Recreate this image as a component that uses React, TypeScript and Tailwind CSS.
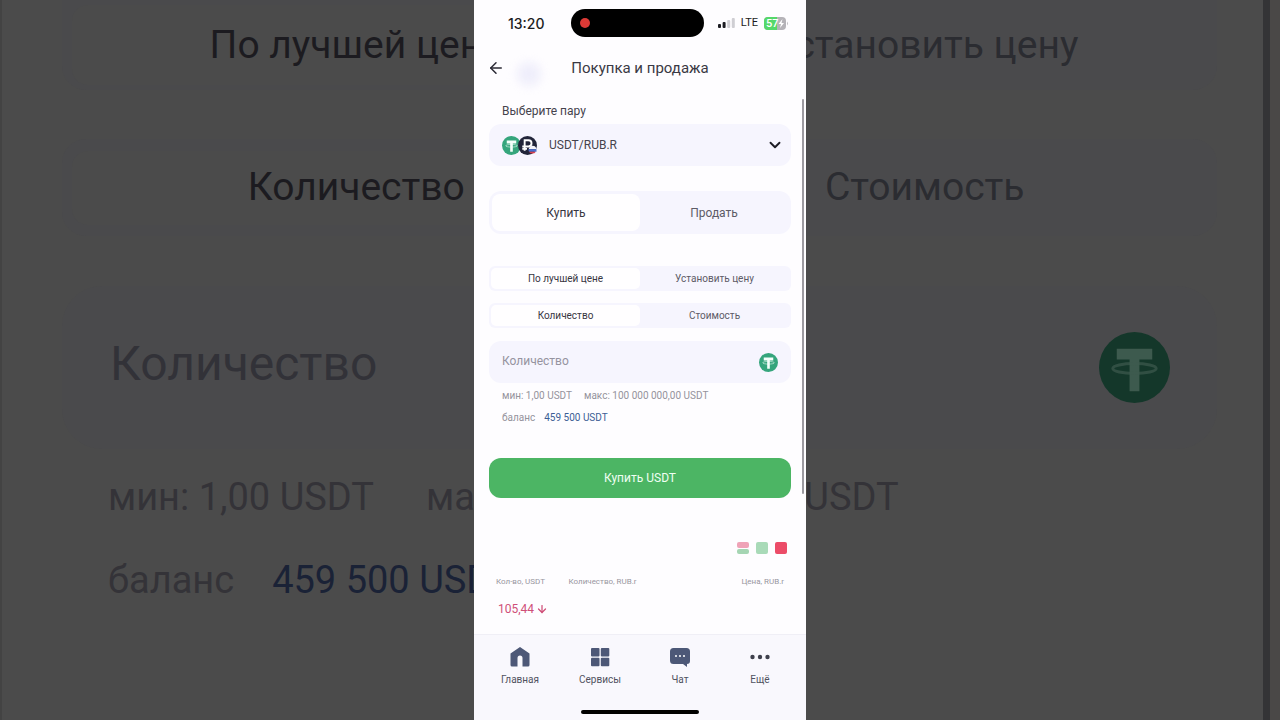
import React, { useState } from "react";
import { ArrowDown, ArrowLeft, ChevronDown } from "lucide-react";
import clsx from "clsx";

function TetherIcon({ className, disc = "#35a57c", mark = "#f4fffa" }: { className?: string; disc?: string; mark?: string }) {
  return (
    <svg viewBox="0 0 72 72" className={className} aria-hidden="true">
      <circle cx="36" cy="36" r="36" fill={disc} />
      <path d="M18 17h36v11H41v32H31V28H18z" fill={mark} />
      <ellipse cx="36" cy="37" rx="22" ry="5" fill="none" stroke={mark} strokeOpacity="0.7" strokeWidth="3" />
    </svg>
  );
}

function RubleIcon({ className }: { className?: string }) {
  return (
    <svg viewBox="0 0 40 40" className={className} aria-hidden="true">
      <circle cx="20" cy="20" r="20" fill="#22253a" />
      <path d="M14 31V9h8a6.500 6.500 0 0 1 0 13H9M9 27h10" fill="none" stroke="#fff" strokeWidth="4" />
      <path d="M22.500 28a8.500 8.500 0 0 1 16-3v3z" fill="#f4f4fb" />
      <path d="M22 28h17v5H23z" fill="#4a6ed0" />
      <path d="M23 33h14.500a8.500 8.500 0 0 1-14.500 0z" fill="#d8404f" />
    </svg>
  );
}

function StatusBar() {
  return (
    <div className="flex h-[46px] items-center pl-[34px] pr-[18px] text-[#1c1c22]">
      <span className="w-[63px] font-['Inter',sans-serif] text-[14px] font-medium">13:20</span>
      <div className="flex h-7 w-[133px] items-center rounded-full bg-black pl-[9px]">
        <span className="size-[10px] rounded-full bg-[#dc3a36]" />
      </div>
      <div className="ml-auto flex items-center gap-[6px]">
        <svg viewBox="0 0 17 10" className="h-[10px] w-[17px]" aria-hidden="true">
          <rect x="0" y="6" width="3" height="4" rx="1" fill="#1c1c22" />
          <rect x="4.6" y="4" width="3" height="6" rx="1" fill="#1c1c22" />
          <rect x="9.2" y="2" width="3" height="8" rx="1" fill="#cfced3" />
          <rect x="13.8" y="0" width="3" height="10" rx="1" fill="#cfced3" />
        </svg>
        <span className="text-[11px] leading-4">LTE</span>
        <div className="relative flex h-[13px] w-6 items-center">
          <svg viewBox="0 0 24 13" className="absolute inset-0 size-full" aria-hidden="true">
            <rect width="22" height="13" rx="4" fill="#b5b3b8" />
            <path d="M4 0h9v13H4a4 4 0 0 1-4-4V4a4 4 0 0 1 4-4z" fill="#55d869" />
            <path d="M23 4.500q1.500 2 0 4z" fill="#b5b3b8" />
            <path d="M18.500 2l-4 5h2.500l-1 4 4-5H17.500z" fill="#fff" />
          </svg>
          <span className="relative pl-[2px] text-[11px] font-medium leading-none text-white">57</span>
        </div>
      </div>
    </div>
  );
}

function Segmented({ options, large = false }: { options: string[]; large?: boolean }) {
  const [active, setActive] = useState(0);

  return (
    <div className={clsx("flex bg-[#f6f5fe]", large ? "h-[43px] rounded-xl p-[3px]" : "h-[25px] rounded-md p-[2px]")}>
      {options.map((option, i) => (
        <button
          key={option}
          type="button"
          aria-pressed={i === active}
          onClick={() => setActive(i)}
          className={clsx(
            "flex-1",
            large ? "rounded-lg text-[12px]" : "rounded-[5px] text-[10px]",
            i === active ? "bg-[#fffeff] text-[#38363f]" : "text-[#5d5b66]"
          )}
        >
          {option}
        </button>
      ))}
    </div>
  );
}

function TradeForm() {
  return (
    <form className="flex flex-col px-[15px]" onSubmit={(e) => e.preventDefault()}>
      <label htmlFor="pair" className="mt-[13px] pl-[13px] text-[12px] leading-4 text-[#45434d]">
        Выберите пару
      </label>
      <div className="relative mt-[5px]">
        <select id="pair" className="h-[42px] w-full appearance-none rounded-xl bg-[#f6f5fe] pl-[60px] text-[12px] text-[#45434d]">
          <option>USDT/RUB.R</option>
        </select>
        <div className="pointer-events-none absolute inset-y-0 left-[13px] flex items-center">
          <TetherIcon className="size-[19px]" />
          <RubleIcon className="-ml-[3px] size-[19px]" />
        </div>
        <ChevronDown size={18} strokeWidth={2.5} className="pointer-events-none absolute right-[7px] top-3 text-[#1d1c24]" />
      </div>

      <div className="mt-[25px]">
        <Segmented large options={["Купить", "Продать"]} />
      </div>
      <div className="mt-8 flex flex-col gap-3">
        <Segmented options={["По лучшей цене", "Установить цену"]} />
        <Segmented options={["Количество", "Стоимость"]} />
      </div>

      <div className="relative mt-[13px]">
        <input
          type="text"
          inputMode="decimal"
          aria-label="Количество"
          placeholder="Количество"
          className="h-[42px] w-full rounded-xl bg-[#f6f5fe] pb-[3px] pl-[13px] pr-11 text-[12px] placeholder:text-[#95939f]"
        />
        <TetherIcon className="pointer-events-none absolute right-[13px] top-3 size-[19px]" />
      </div>

      <div className="mt-[5px] flex gap-3 pl-[13px] text-[10px] leading-4 text-[#95939c]">
        <span>мин: 1,00 USDT</span>
        <span>макс: 100 000 000,00 USDT</span>
      </div>
      <div className="mt-[6px] flex gap-[9px] pl-[13px] text-[10px] leading-4 text-[#95939c]">
        <span>баланс</span>
        <span className="text-[#3c5d95]">459 500 USDT</span>
      </div>

      <button type="submit" className="mt-8 h-10 rounded-xl bg-[#4cb564] text-[12px] text-[#effff2]">
        Купить USDT
      </button>
    </form>
  );
}

function OrderBook() {
  return (
    <section className="mt-[44px] px-[19px]">
      <div className="flex justify-end gap-[7px]">
        <button type="button" aria-label="Все заявки" className="flex size-3 flex-col gap-[1px]">
          <span className="w-full flex-1 rounded-[2px] bg-[#efa3b7]" />
          <span className="w-full flex-1 rounded-[2px] bg-[#a5d5b3]" />
        </button>
        <button type="button" aria-label="Покупка" className="size-3 rounded-[2px] bg-[#a9dab8]" />
        <button type="button" aria-label="Продажа" className="size-3 rounded-[2px] bg-[#ec4c68]" />
      </div>
      <table className="mt-5 w-full">
        <thead>
          <tr className="text-left text-[8px] leading-4 text-[#9896a0]">
            <th className="w-1/4 whitespace-nowrap pl-[3px] font-normal">Кол-во, USDT</th>
            <th className="pl-[2px] font-normal">Количество, RUB.r</th>
            <th className="pr-[3px] text-right font-normal">Цена, RUB.r</th>
          </tr>
        </thead>
        <tbody>
          <tr>
            <td colSpan={3} className="pl-[5px] pt-[11px]">
              <span className="flex items-center gap-[2px] text-[12px] leading-4 text-[#cf4f78]">
                105,44
                <ArrowDown size={12} strokeWidth={2.5} />
              </span>
            </td>
          </tr>
        </tbody>
      </table>
    </section>
  );
}

const tabs = [
  {
    label: "Главная",
    icon: <path d="M10 0 19.500 6.500V18a1.500 1.500 0 0 1-1.500 1.500H12.500V11a2.500 2.500 0 0 0-5 0v8.500H2A1.500 1.500 0 0 1 .5 18V6.500z" />,
  },
  {
    label: "Сервисы",
    icon: (
      <>
        <rect x="1" y="1" width="8.500" height="8.500" rx="1" />
        <rect x="10.800" y="1" width="8.500" height="8.500" rx="1" />
        <rect x="1" y="10.800" width="8.500" height="8.500" rx="1" />
        <rect x="10.800" y="10.800" width="8.500" height="8.500" rx="1" />
      </>
    ),
  },
  {
    label: "Чат",
    icon: (
      <>
        <path d="M3.500 1h13A3.500 3.500 0 0 1 20 4.500V14a3 3 0 0 1-3 3v3l-4-3H3.500A3.500 3.500 0 0 1 0 13.500v-9A3.500 3.500 0 0 1 3.500 1z" />
        <g fill="#fff">
          <circle cx="6" cy="9" r="1" />
          <circle cx="10" cy="9" r="1" />
          <circle cx="14" cy="9" r="1" />
        </g>
      </>
    ),
  },
  {
    label: "Ещё",
    icon: (
      <g fill="#3f404c">
        <circle cx="2.500" cy="10" r="2.200" />
        <circle cx="10" cy="10" r="2.200" />
        <circle cx="17.500" cy="10" r="2.200" />
      </g>
    ),
  },
];

function TabBar() {
  return (
    <nav className="mt-auto flex h-[86px] flex-col items-center border-t border-[#f0eff6] bg-[#f9f8fd]">
      <div className="flex w-full px-[6px] pt-3">
        {tabs.map((tab) => (
          <a key={tab.label} href="#" className="flex flex-1 flex-col items-center gap-[5px] text-[10px] leading-4 text-[#50525f]">
            <svg viewBox="0 0 20 20" className="size-5 fill-[#4d5877]" aria-hidden="true">
              {tab.icon}
            </svg>
            {tab.label}
          </a>
        ))}
      </div>
      <span className="mb-[6px] mt-auto h-[4px] w-[118px] rounded-full bg-black" />
    </nav>
  );
}

// dimmed, enlarged copy of the form behind the phone
function Backdrop() {
  return (
    <div aria-hidden="true" className="absolute inset-0 flex justify-between overflow-hidden bg-[#4b4b4b]">
      <div className="w-[2px] bg-[#434343]" />
      <div className="flex flex-1 flex-col pl-[60px] pr-[46px]">
        <div className="flex h-[90px] items-center rounded-b-3xl bg-[#4a4a4c] pl-[10px] text-center text-[39px] text-[#2b2c31]">
          <span className="flex h-20 flex-1 items-center justify-center rounded-2xl bg-[#4b4b4b] text-[#1c1b20]">По лучшей цене</span>
          <span className="flex-1 pr-2">Установить цену</span>
        </div>
        <div className="mt-[49px] flex h-[97px] items-center rounded-3xl bg-[#4a4a4c] pl-[10px] text-center text-[39px] text-[#2b2c31]">
          <span className="flex h-[74px] flex-1 items-center justify-center rounded-2xl bg-[#4b4b4b] text-[#1c1b20]">Количество</span>
          <span className="flex-1 pr-2">Стоимость</span>
        </div>
        <div className="mt-[50px] flex h-[163px] items-center justify-between rounded-[40px] bg-[#4a4a4c] pl-[48px] pr-[47px] text-[48px] text-[#323238]">
          <span className="pb-2">Количество</span>
          <TetherIcon className="size-[71px]" disc="#14372a" mark="#3d5a4e" />
        </div>
        <div className="mt-[24px] flex gap-[52px] whitespace-nowrap pl-[46px] text-[38px] leading-[48px] text-[#343338]">
          <span>мин: 1,00 USDT</span>
          <span>макс: 100 000 000,00 USDT</span>
        </div>
        <div className="mt-[35px] flex gap-[38px] whitespace-nowrap pl-[46px] text-[38px] leading-[48px] text-[#343338]">
          <span>баланс</span>
          <span className="text-[#1a2236]">459 500 USDT</span>
        </div>
      </div>
      <div className="w-[7px] bg-[#343436]" />
      <div className="w-[10px] bg-[#4a4847]" />
    </div>
  );
}

export default function App() {
  return (
    <div className="relative flex min-h-screen justify-center overflow-hidden font-['Roboto',sans-serif]">
      <Backdrop />
      <main className="relative flex w-full max-w-[332px] flex-col bg-[#fefdff]">
        <StatusBar />
        <header className="grid h-11 grid-cols-[1fr_auto_1fr] items-center px-[13px]">
          <button type="button" aria-label="Назад" className="flex items-center gap-3 text-[#2b2a35]">
            <ArrowLeft size={18} strokeWidth={2} />
            <span className="mt-3 size-6 rounded-full bg-[#efeefb] blur-[5px]" />
          </button>
          <h1 className="text-[15px] text-[#3a3944]">Покупка и продажа</h1>
        </header>
        <TradeForm />
        <OrderBook />
        <TabBar />
        <span className="absolute right-[2px] top-[99px] h-[395px] w-[2px] rounded-full bg-[#9c9aa0]" />
      </main>
    </div>
  );
}
